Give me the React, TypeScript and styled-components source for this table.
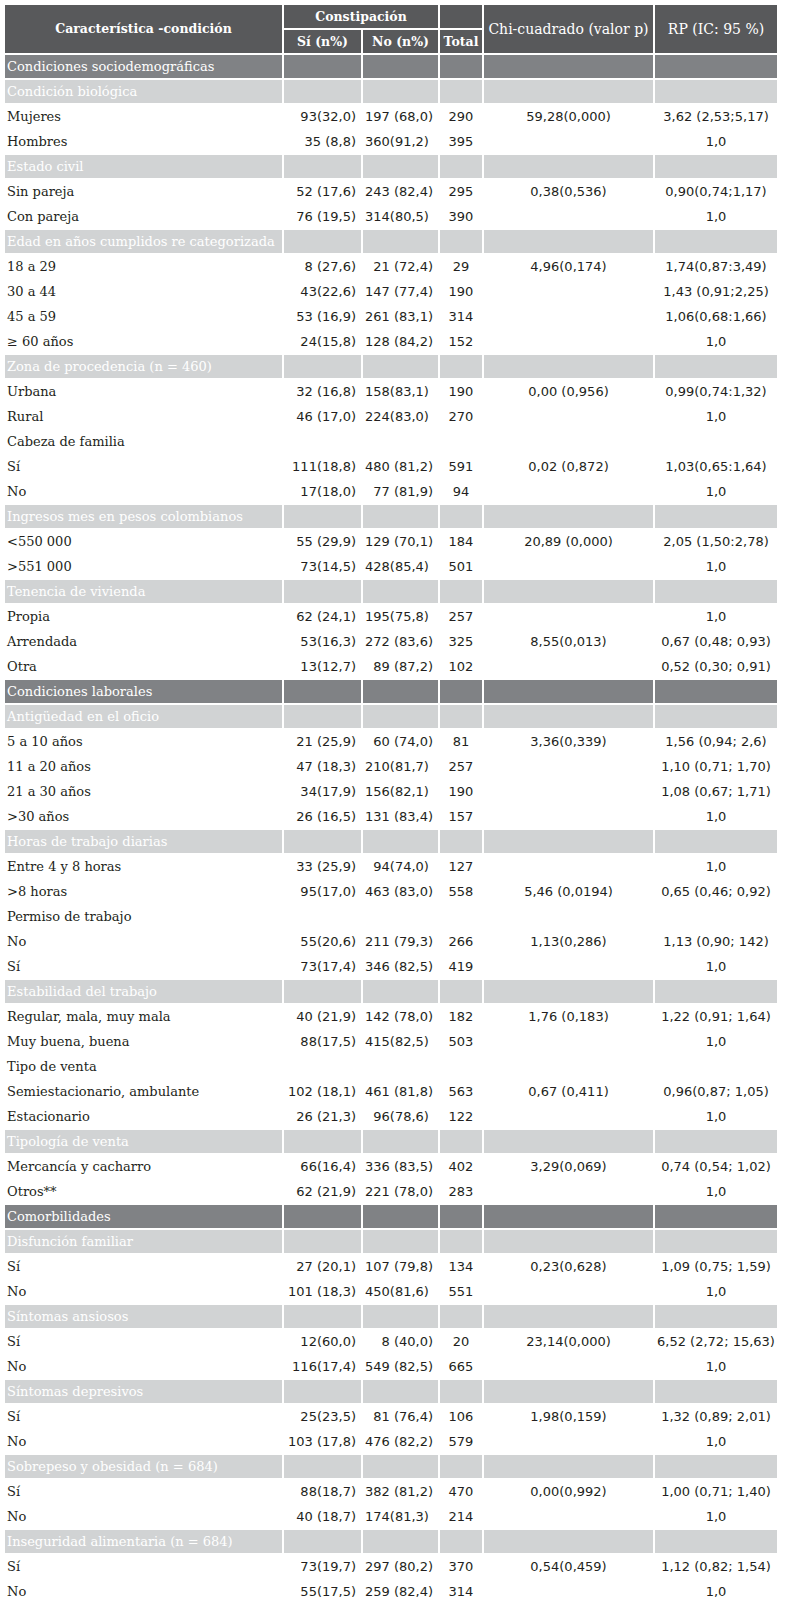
import React from "react";
import styled, { createGlobalStyle, css } from "styled-components";

const GlobalStyle = createGlobalStyle`
  html, body { margin: 0; padding: 0; background: #ffffff; }
  body { font-family: "DejaVu Serif", "Liberation Serif", serif; }
`;

const FS = "\u2007";

type Tone = "dark" | "light" | "plain";

type Item =
  | { kind: "section"; label: string; tone: Tone }
  | { kind: "data"; label: string; si: string; no: string; total: string; chi?: string; rp?: string };

const S = (label: string, tone: Tone = "light"): Item => ({ kind: "section", label, tone });
const D = (label: string, si: string, no: string, total: string, chi = "", rp = ""): Item => ({
  kind: "data", label, si, no, total, chi, rp,
});

const rows: Item[] = [
  S("Condiciones sociodemográficas", "dark"),
  S("Condición biológica"),
  D("Mujeres", "93(32,0)", "197 (68,0)", "290", "59,28(0,000)", "3,62 (2,53;5,17)"),
  D("Hombres", "35 (8,8)", "360(91,2)", "395", "", "1,0"),
  S("Estado civil"),
  D("Sin pareja", "52 (17,6)", "243 (82,4)", "295", "0,38(0,536)", "0,90(0,74;1,17)"),
  D("Con pareja", "76 (19,5)", "314(80,5)", "390", "", "1,0"),
  S("Edad en años cumplidos re categorizada"),
  D("18 a 29", "8 (27,6)", FS + "21 (72,4)", "29", "4,96(0,174)", "1,74(0,87:3,49)"),
  D("30 a 44", "43(22,6)", "147 (77,4)", "190", "", "1,43 (0,91;2,25)"),
  D("45 a 59", "53 (16,9)", "261 (83,1)", "314", "", "1,06(0,68:1,66)"),
  D("≥ 60 años", "24(15,8)", "128 (84,2)", "152", "", "1,0"),
  S("Zona de procedencia (n = 460)"),
  D("Urbana", "32 (16,8)", "158(83,1)", "190", "0,00 (0,956)", "0,99(0,74:1,32)"),
  D("Rural", "46 (17,0)", "224(83,0)", "270", "", "1,0"),
  S("Cabeza de familia", "plain"),
  D("Sí", "111(18,8)", "480 (81,2)", "591", "0,02 (0,872)", "1,03(0,65:1,64)"),
  D("No", "17(18,0)", FS + "77 (81,9)", "94", "", "1,0"),
  S("Ingresos mes en pesos colombianos"),
  D("<550 000", "55 (29,9)", "129 (70,1)", "184", "20,89 (0,000)", "2,05 (1,50:2,78)"),
  D(">551 000", "73(14,5)", "428(85,4)", "501", "", "1,0"),
  S("Tenencia de vivienda"),
  D("Propia", "62 (24,1)", "195(75,8)", "257", "", "1,0"),
  D("Arrendada", "53(16,3)", "272 (83,6)", "325", "8,55(0,013)", "0,67 (0,48; 0,93)"),
  D("Otra", "13(12,7)", FS + "89 (87,2)", "102", "", "0,52 (0,30; 0,91)"),
  S("Condiciones laborales", "dark"),
  S("Antigüedad en el oficio"),
  D("5 a 10 años", "21 (25,9)", FS + "60 (74,0)", "81", "3,36(0,339)", "1,56 (0,94; 2,6)"),
  D("11 a 20 años", "47 (18,3)", "210(81,7)", "257", "", "1,10 (0,71; 1,70)"),
  D("21 a 30 años", "34(17,9)", "156(82,1)", "190", "", "1,08 (0,67; 1,71)"),
  D(">30 años", "26 (16,5)", "131 (83,4)", "157", "", "1,0"),
  S("Horas de trabajo diarias"),
  D("Entre 4 y 8 horas", "33 (25,9)", FS + "94(74,0)", "127", "", "1,0"),
  D(">8 horas", "95(17,0)", "463 (83,0)", "558", "5,46 (0,0194)", "0,65 (0,46; 0,92)"),
  S("Permiso de trabajo", "plain"),
  D("No", "55(20,6)", "211 (79,3)", "266", "1,13(0,286)", "1,13 (0,90; 142)"),
  D("Sí", "73(17,4)", "346 (82,5)", "419", "", "1,0"),
  S("Estabilidad del trabajo"),
  D("Regular, mala, muy mala", "40 (21,9)", "142 (78,0)", "182", "1,76 (0,183)", "1,22 (0,91; 1,64)"),
  D("Muy buena, buena", "88(17,5)", "415(82,5)", "503", "", "1,0"),
  S("Tipo de venta", "plain"),
  D("Semiestacionario, ambulante", "102 (18,1)", "461 (81,8)", "563", "0,67 (0,411)", "0,96(0,87; 1,05)"),
  D("Estacionario", "26 (21,3)", FS + "96(78,6)", "122", "", "1,0"),
  S("Tipología de venta"),
  D("Mercancía y cacharro", "66(16,4)", "336 (83,5)", "402", "3,29(0,069)", "0,74 (0,54; 1,02)"),
  D("Otros**", "62 (21,9)", "221 (78,0)", "283", "", "1,0"),
  S("Comorbilidades", "dark"),
  S("Disfunción familiar"),
  D("Sí", "27 (20,1)", "107 (79,8)", "134", "0,23(0,628)", "1,09 (0,75; 1,59)"),
  D("No", "101 (18,3)", "450(81,6)", "551", "", "1,0"),
  S("Síntomas ansiosos"),
  D("Sí", "12(60,0)", FS + FS + "8 (40,0)", "20", "23,14(0,000)", "6,52 (2,72; 15,63)"),
  D("No", "116(17,4)", "549 (82,5)", "665", "", "1,0"),
  S("Síntomas depresivos"),
  D("Sí", "25(23,5)", FS + "81 (76,4)", "106", "1,98(0,159)", "1,32 (0,89; 2,01)"),
  D("No", "103 (17,8)", "476 (82,2)", "579", "", "1,0"),
  S("Sobrepeso y obesidad (n = 684)"),
  D("Sí", "88(18,7)", "382 (81,2)", "470", "0,00(0,992)", "1,00 (0,71; 1,40)"),
  D("No", "40 (18,7)", "174(81,3)", "214", "", "1,0"),
  S("Inseguridad alimentaria (n = 684)"),
  D("Sí", "73(19,7)", "297 (80,2)", "370", "0,54(0,459)", "1,12 (0,82; 1,54)"),
  D("No", "55(17,5)", "259 (82,4)", "314", "", "1,0"),
];

const Page = styled.div`
  padding: 3px 0 0 3px;
`;

const Table = styled.table`
  border-collapse: separate;
  border-spacing: 2px;
  table-layout: fixed;
  width: 776px;
  color: #231f20;
`;

const Col = styled.col<{ $w: number }>`
  width: ${(p) => p.$w}px;
`;

const HeadCell = styled.th<{ $bold?: boolean; $h?: number }>`
  background: #58595b;
  color: #ffffff;
  font-family: "DejaVu Serif", "Liberation Serif", serif;
  font-size: ${(p) => (p.$bold ? "12.5px" : "14px")};
  font-weight: ${(p) => (p.$bold ? 700 : 400)};
  text-align: center;
  vertical-align: middle;
  height: ${(p) => p.$h ?? 23}px;
  padding: 0 2px;
  white-space: nowrap;
  line-height: 16px;
`;

const toneBg: Record<Tone, string> = {
  dark: "#808285",
  light: "#d1d3d4",
  plain: "transparent",
};

const SectionCell = styled.td<{ $tone: Tone }>`
  background: ${(p) => toneBg[p.$tone]};
  color: ${(p) => (p.$tone === "plain" ? "#231f20" : "#ffffff")};
  height: 23px;
  padding: 0 2px;
  font-family: "DejaVu Serif", "Liberation Serif", serif;
  font-size: 13px;
  line-height: 16px;
  white-space: nowrap;
  vertical-align: middle;
`;

const LabelCell = styled.td`
  height: 23px;
  padding: 0 2px;
  font-family: "DejaVu Serif", "Liberation Serif", serif;
  font-size: 13px;
  line-height: 16px;
  white-space: nowrap;
  vertical-align: middle;
`;

const NumCell = styled.td<{ $align: "left" | "right" | "center" }>`
  height: 23px;
  padding: ${(p) => (p.$align === "right" ? "0 5px 0 0" : p.$align === "left" ? "0 0 0 2px" : "0")};
  font-family: "DejaVu Sans", Verdana, sans-serif;
  font-size: 13px;
  line-height: 16px;
  text-align: ${(p) => p.$align};
  white-space: pre;
  vertical-align: middle;
  ${(p) => p.$align === "left" && css`overflow: visible;`}
`;

export default function App() {
  return (
    <>
      <GlobalStyle />
      <Page>
        <Table>
          <colgroup>
            <Col $w={277} />
            <Col $w={77} />
            <Col $w={75} />
            <Col $w={42} />
            <Col $w={169} />
            <Col $w={122} />
          </colgroup>
          <thead>
            <tr>
              <HeadCell $bold rowSpan={2}>Característica -condición</HeadCell>
              <HeadCell $bold colSpan={2}>Constipación</HeadCell>
              <HeadCell />
              <HeadCell rowSpan={2}>Chi-cuadrado (valor p)</HeadCell>
              <HeadCell rowSpan={2}>RP (IC: 95 %)</HeadCell>
            </tr>
            <tr>
              <HeadCell $bold>Sí (n%)</HeadCell>
              <HeadCell $bold>No (n%)</HeadCell>
              <HeadCell $bold>Total</HeadCell>
            </tr>
          </thead>
          <tbody>
            {rows.map((r, i) =>
              r.kind === "section" ? (
                <tr key={i}>
                  <SectionCell $tone={r.tone}>{r.label}</SectionCell>
                  <SectionCell $tone={r.tone} />
                  <SectionCell $tone={r.tone} />
                  <SectionCell $tone={r.tone} />
                  <SectionCell $tone={r.tone} />
                  <SectionCell $tone={r.tone} />
                </tr>
              ) : (
                <tr key={i}>
                  <LabelCell>{r.label}</LabelCell>
                  <NumCell $align="right">{r.si}</NumCell>
                  <NumCell $align="left">{r.no}</NumCell>
                  <NumCell $align="center">{r.total}</NumCell>
                  <NumCell $align="center">{r.chi}</NumCell>
                  <NumCell $align="center">{r.rp}</NumCell>
                </tr>
              )
            )}
          </tbody>
        </Table>
      </Page>
    </>
  );
}
